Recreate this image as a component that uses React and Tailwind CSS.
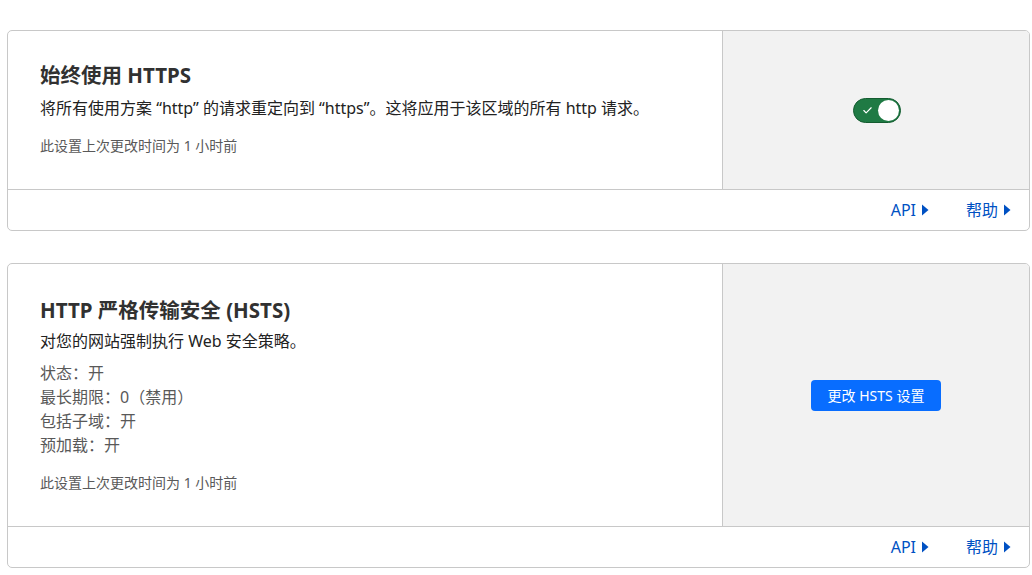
import { Check } from "lucide-react";

const font = { fontFamily: '"Noto Sans", "Noto Sans CJK SC", sans-serif' };

function Caret() {
  return (
    <svg width="8" height="12" viewBox="0 0 8 12" className="ml-[5px]">
      <path d="M1 0.5 L7.5 6 L1 11.5 Z" fill="#0051c3" />
    </svg>
  );
}

function Footer() {
  return (
    <div className="flex justify-end items-center gap-[37px] h-[41px] pr-[18px] border-t border-[#c8c8c8]">
      <a className="flex items-center text-[16px] text-[#0051c3]">API<Caret /></a>
      <a className="flex items-center text-[16px] text-[#0051c3]">帮助<Caret /></a>
    </div>
  );
}

function Card({ title, desc, children, action, top = "pt-[31px]", descGap = "mt-[8px]" }) {
  return (
    <div className="border border-[#c8c8c8] rounded-[5px] bg-white overflow-hidden">
      <div className="flex">
        <div className={`flex-1 pl-[32px] pr-8 pb-[33px] ${top}`}>
          <h2 className="text-[20.5px] leading-[26px] font-bold text-[#313131]">{title}</h2>
          <p className={`${descGap} text-[16px] leading-[24px] text-[#222]`}>{desc}</p>
          {children}
          <p className="mt-[16px] text-[14px] leading-[20px] text-[#595959]">此设置上次更改时间为 1 小时前</p>
        </div>
        <div className="w-[307px] shrink-0 bg-[#f2f2f2] border-l border-[#c8c8c8] flex items-center justify-center">
          {action}
        </div>
      </div>
      <Footer />
    </div>
  );
}

export default function App() {
  return (
    <div className="min-h-screen bg-white pt-[30px] pl-[7px] pr-[2px]" style={font}>
      <div className="space-y-[32px]">
        <Card
          title="始终使用 HTTPS"
          desc="将所有使用方案 “http” 的请求重定向到 “https”。这将应用于该区域的所有 http 请求。"
          action={
            <div className="w-[48px] h-[25px] rounded-full bg-[#1f7a44] border border-[#145c30] flex items-center justify-between pl-[8px] pr-[1px] ml-[2px]">
              <Check size={11} strokeWidth={2.5} className="text-white" />
              <div className="w-[21px] h-[21px] rounded-full bg-white" />
            </div>
          }
        />
        <Card
          top="pt-[33px]"
          descGap="mt-[6px]"
          title="HTTP 严格传输安全 (HSTS)"
          desc="对您的网站强制执行 Web 安全策略。"
          action={
            <button className="h-[31px] px-[17px] rounded-[4px] bg-[#086dff] text-white text-[14px]">
              更改 HSTS 设置
            </button>
          }
        >
          <div className="mt-[8px] text-[16px] leading-[24px] text-[#595959]">
            <p>状态：开</p>
            <p>最长期限：0（禁用）</p>
            <p>包括子域：开</p>
            <p>预加载：开</p>
          </div>
        </Card>
      </div>
    </div>
  );
}
